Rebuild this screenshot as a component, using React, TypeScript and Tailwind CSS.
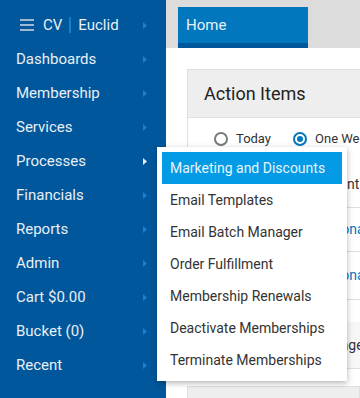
const navItems = [
  "Dashboards",
  "Membership",
  "Services",
  "Processes",
  "Financials",
  "Reports",
  "Admin",
  "Cart $0.00",
  "Bucket (0)",
  "Recent",
];

const processItems = [
  "Marketing and Discounts",
  "Email Templates",
  "Email Batch Manager",
  "Order Fulfillment",
  "Membership Renewals",
  "Deactivate Memberships",
  "Terminate Memberships",
];

const Caret = ({ active }: { active?: boolean }) => (
  <svg width="4" height="7" viewBox="0 0 4 7" className="shrink-0">
    <polygon points="0,0 4,3.5 0,7" fill={active ? "#e6eef6" : "#1f7fcc"} />
  </svg>
);

const App = () => {
  return (
    <div
      className="relative flex w-[360px] h-[398px] overflow-hidden bg-white"
      style={{ fontFamily: "Roboto, 'Liberation Sans', sans-serif" }}
    >
      {/* Sidebar */}
      <div className="w-[166px] shrink-0 bg-[#01579b] text-[#e8eff6]">
        <div className="h-[42px] pt-2 flex items-center pl-5 pr-[19px]">
          <div className="flex flex-col gap-[3px] w-[14px]">
            <span className="h-[2px] bg-[#9fb9d4]" />
            <span className="h-[2px] bg-[#9fb9d4]" />
            <span className="h-[2px] bg-[#9fb9d4]" />
          </div>
          <span className="ml-[9px] text-[15px]">CV</span>
          <span className="ml-[7px] w-[2px] h-[16px] bg-[#0a82cc]" />
          <span className="ml-[7px] text-[15px]">Euclid</span>
          <div className="flex-1" />
          <Caret />
        </div>
        {navItems.map((item) => (
          <div
            key={item}
            className="h-[34px] flex items-center pl-4 pr-[19px] text-[15px]"
          >
            <span className="flex-1">{item}</span>
            <Caret active={item === "Processes"} />
          </div>
        ))}
      </div>

      {/* Main */}
      <div className="flex-1 flex flex-col min-w-0">
        <div className="h-[48px] shrink-0 bg-[#dcdcdc] pt-[7px] pl-3">
          <div className="w-[130px] h-[41px] bg-[#0277bd] border-b-[5px] border-[#01579b] flex items-center pl-2 text-[15px] text-[#e8f1f8]">
            Home
          </div>
        </div>

        <div className="flex-1 pt-[21px] pl-[21px]">
          <div className="w-[300px] border border-[#e0e0e0] border-r-0">
            <div className="h-[48px] bg-[#eeeeee] border-b border-[#e0e0e0] flex items-center pl-4 text-[18px] text-[#222]">
              Action Items
            </div>
            <div className="h-[42px] flex items-center pl-[26px] text-[13px] text-[#333]">
              <span className="w-[14px] h-[14px] rounded-full border-2 border-[#7a7a7a]" />
              <span className="ml-[8px]">Today</span>
              <span className="ml-[22px] w-[14px] h-[14px] rounded-full border-2 border-[#0277bd] flex items-center justify-center">
                <span className="w-[6px] h-[6px] rounded-full bg-[#0277bd]" />
              </span>
              <span className="ml-[8px]">One Week</span>
            </div>
            <div className="h-[48px] border-b border-[#e0e0e0] flex items-center pl-[142px] pt-[2px] text-[14px] text-[#333]">
              Contact
            </div>
            <div className="h-[44px] border-b border-[#e0e0e0] flex items-center pl-[144px] text-[14px] text-[#0277bd]">
              Donation
            </div>
            <div className="h-[48px] border-b border-[#e0e0e0] flex items-center pl-[144px] text-[14px] text-[#0277bd]">
              Donation
            </div>
            <div className="h-[22px]" />
            <div className="h-[46px] bg-[#f7f7f7] flex items-center pl-[144px] text-[14px] text-[#333]">
              Page
            </div>
          </div>
          <div className="mt-[17px] h-[30px] bg-[#eeeeee] border border-[#e0e0e0]" />
        </div>
      </div>

      {/* Processes flyout */}
      <div className="absolute left-[157px] top-[147px] w-[190px] bg-white p-[5px] shadow-[0_2px_6px_rgba(0,0,0,0.3)] text-[14px] text-[#333]">
        {processItems.map((item, i) => (
          <div
            key={item}
            className={`h-[32px] flex items-center pl-[8px] ${
              i === 0 ? "bg-[#039be5] text-[#e8f4fb]" : ""
            }`}
          >
            {item}
          </div>
        ))}
      </div>
    </div>
  );
};

export default App;
